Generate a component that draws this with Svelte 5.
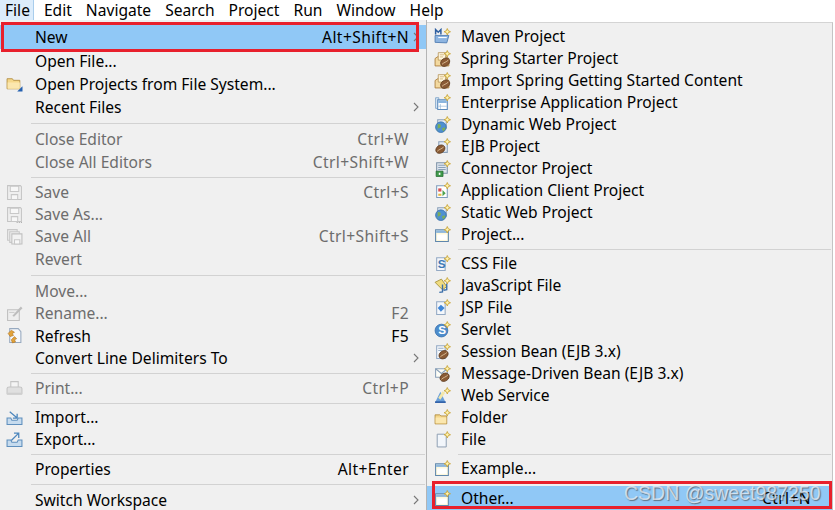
<script>
  const bar = ['File','Edit','Navigate','Search','Project','Run','Window','Help'];
  const left = [
    {t:'New',k:'Alt+Shift+N',h:24,sel:1,arrow:1},
    {t:'Open File...',h:23},
    {t:'Open Projects from File System...',h:23,i:'folderLink'},
    {t:'Recent Files',h:23,arrow:1},
    {h:9},
    {t:'Close Editor',k:'Ctrl+W',h:23,d:1},
    {t:'Close All Editors',k:'Ctrl+Shift+W',h:23,d:1},
    {h:8},
    {t:'Save',k:'Ctrl+S',h:22,d:1,i:'save'},
    {t:'Save As...',h:22,d:1,i:'saveAs'},
    {t:'Save All',k:'Ctrl+Shift+S',h:22,d:1,i:'saveAll'},
    {t:'Revert',h:23,d:1},
    {h:9},
    {t:'Move...',h:23,d:1},
    {t:'Rename...',k:'F2',h:22,d:1,i:'rename'},
    {t:'Refresh',k:'F5',h:23,i:'refresh'},
    {t:'Convert Line Delimiters To',h:22,arrow:1},
    {h:8},
    {t:'Print...',k:'Ctrl+P',h:22,d:1,i:'print'},
    {h:7},
    {t:'Import...',h:22,i:'import'},
    {t:'Export...',h:22,i:'export'},
    {h:8},
    {t:'Properties',k:'Alt+Enter',h:22},
    {h:8},
    {t:'Switch Workspace',h:23,arrow:1}
  ];
  const right = [
    {t:'Maven Project',h:22,i:'maven'},
    {t:'Spring Starter Project',h:22,i:'spring'},
    {t:'Import Spring Getting Started Content',h:22,i:'spring'},
    {t:'Enterprise Application Project',h:22,i:'enterprise'},
    {t:'Dynamic Web Project',h:22,i:'web'},
    {t:'EJB Project',h:22,i:'ejb'},
    {t:'Connector Project',h:22,i:'connector'},
    {t:'Application Client Project',h:22,i:'client'},
    {t:'Static Web Project',h:22,i:'web'},
    {t:'Project...',h:22,i:'window'},
    {h:7},
    {t:'CSS File',h:22,i:'css'},
    {t:'JavaScript File',h:22,i:'js'},
    {t:'JSP File',h:22,i:'jsp'},
    {t:'Servlet',h:22,i:'servlet'},
    {t:'Session Bean (EJB 3.x)',h:22,i:'session'},
    {t:'Message-Driven Bean (EJB 3.x)',h:22,i:'message'},
    {t:'Web Service',h:22,i:'service'},
    {t:'Folder',h:22,i:'folder'},
    {t:'File',h:22,i:'file'},
    {h:7},
    {t:'Example...',h:22,i:'window'},
    {h:7},
    {t:'Other...',k:'Ctrl+N',h:24,sel:1,i:'window'}
  ];
</script>

{#snippet star()}
  <path d="M12.5 .5l.9 2.1 2.1.9-2.1.9-.9 2.1-.9-2.1-2.1-.9 2.1-.9z" fill="#fff4b0" stroke="#c8a030" stroke-width=".8"/>
{/snippet}
{#snippet bean(x, y)}
  <ellipse cx={x} cy={y} rx="4.6" ry="3.6" transform="rotate(-35 {x} {y})" fill="#8a5a34" stroke="#5c3a20" stroke-width=".7"/>
  <path d="M{x-3} {y+2}C{x-1} {y},{x+1} {y},{x+3} {y-2}" stroke="#e0c8a0" stroke-width=".8" fill="none"/>
{/snippet}
{#snippet globe(x, y)}
  <circle cx={x} cy={y} r="5" fill="#4f90d0" stroke="#2f6aa8" stroke-width=".7"/>
  <path d="M{x-3} {y-3}q3 0 3 2t-2 2-1 3M{x+1} {y+1}l3-1 0 2-2 2z" fill="#7cae58"/>
{/snippet}
{#snippet docIcon()}
  <path d="M2.5 2.5h8v12h-8z" fill="#f4f7fb" stroke="#93a9c4"/>
{/snippet}

{#snippet icon(n)}
  <svg class="ico" width="17" height="17" viewBox="0 0 16 16">
    {#if n==='folderLink'}
      <path d="M1 3.500h5l1 1.500h6v8H1z" fill="#f5d88a" stroke="#b08a3c" stroke-width=".8"/><path d="M1.500 7h11.500v6H1.500z" fill="#fbe7ae"/><path d="M15.500 10.500v5h-5z" fill="#2460b0"/>
    {:else if n==='save' || n==='saveAs'}
      <path d="M1.500 1.500h12l1 1v12h-13z" fill="#efefef" stroke="#c4c4c4"/><path d="M4 2h8v5H4zM5 10h6v4.500H5z" fill="#f7f7f7" stroke="#c8c8c8"/>
      {#if n==='saveAs'}<path d="M10 15.500h1M12 15.500h1M14 15.500h1" stroke="#aaa"/>{/if}
    {:else if n==='saveAll'}
      <path d="M1.500 1.500h9v10h-9z" fill="#ececec" stroke="#c8c8c8"/><path d="M3.500 3.500h9v10h-9z" fill="#ececec" stroke="#c8c8c8"/><path d="M5.500 5.500h9.500v9.500H5.500z" fill="#f2f2f2" stroke="#c0c0c0"/><path d="M8 11h5v4H8z" fill="#f8f8f8" stroke="#c8c8c8"/>
    {:else if n==='rename'}
      <path d="M1.500 4.500h11v10h-11z" fill="#eeeeee" stroke="#c0c0c0"/><path d="M6 10l8-8.500 1.500 1.500L7.500 11z" fill="#bdbdbd"/><path d="M3 7h5" stroke="#ccc"/>
    {:else if n==='refresh'}
      <path d="M3.500 1.500h8l2.500 3v10H3.500z" fill="#f6f8fb" stroke="#97a9bf"/><path d="M2 6l3-3 3 2-2 1 1 2-3 1zM5 12l3-3 2 2-2 1 1 2-3 1z" fill="#e2a33a" stroke="#a86a18" stroke-width=".5"/>
    {:else if n==='print'}
      <path d="M4.500 1.500h7v6h-7z" fill="#f4f4f4" stroke="#c4c4c4"/><path d="M1 8q0-1.500 2-1.500h10q2 0 2 1.500v5H1z" fill="#e0e0e0" stroke="#c4c4c4"/><path d="M1 12h14v2H1z" fill="#cfcfcf"/>
    {:else if n==='import' || n==='export'}
      <path d="M1 8.500h3.500l1 2h5l1-2H15v6H1z" fill="#c6dbee" stroke="#5f8fbd"/>
      {#if n==='import'}<path d="M3.500 2.500l6.500 5.500M10.500 4.500v4h-4" fill="none" stroke="#4d87bd" stroke-width="1.200"/>
      {:else}<path d="M5 9l6.500-6.500M7.500 2h4.500v4.500" fill="none" stroke="#4d87bd" stroke-width="1.200"/>{/if}
    {:else if n==='maven'}
      <path d="M1 13.500V7h13l-2 7z" fill="#8db4e0" stroke="#4a78b0" stroke-width=".8"/>
      <path d="M1.500 6V1.500l2.500 2.500 2.500-2.500V6" fill="none" stroke="#2d5ea0" stroke-width="1.400"/>
      <path d="M4 9h8" stroke="#fff"/>{@render star()}
    {:else if n==='spring'}
      <path d="M1 8l6-4 7 4V15H1z" fill="#f3d9a0" stroke="#a97a38" stroke-width=".8"/><path d="M4 2.500h7v7H4z" fill="#fff6dc" stroke="#b08c50" stroke-width=".7"/><path d="M5.500 4.500h4M5.500 6.500h3" stroke="#c8a870" stroke-width=".7"/>
      {@render bean(10.5, 11.500)}{@render star()}
    {:else if n==='enterprise'}
      <path d="M1.500 3.500h3v10h-3z" fill="#dbe9f6" stroke="#7ba0c6" stroke-width=".8"/><path d="M3.500 5.500h9v9h-9z" fill="#fff" stroke="#5b8abc"/><path d="M4 6h8v2.500H4z" fill="#8ab5de"/><path d="M6 9.500v4.500M4 11.500h8" stroke="#9dbbd8" stroke-width=".7"/>{@render star()}
    {:else if n==='web'}
      <path d="M3.500 3.500h8v8h-8z" fill="#e6edf5" stroke="#8aa0b8"/>{@render globe(6.5, 10.500)}{@render star()}
    {:else if n==='ejb'}
      <path d="M4.500 3.500h8v10h-8z" fill="#e6edf5" stroke="#8aa0b8"/>{@render bean(6, 10.500)}{@render star()}
    {:else if n==='connector'}
      <path d="M2.500 2.500h10v10h-10z" fill="#dfe6ee" stroke="#7f93a8"/><path d="M4 5h7M4 7h7M4 9h7" stroke="#8aa0b8"/><path d="M2 10.500h6.500v5H2z" fill="#3f9a4a" stroke="#22692c" stroke-width=".7"/><path d="M4.500 12h1.500v2H4.500z" fill="#fff"/>{@render star()}
    {:else if n==='client'}
      <path d="M2.500 3.500h10v11h-10z" fill="#fff" stroke="#7f9dbd"/><path d="M4 6h3v3H4z" fill="#d95050"/><path d="M8 7.500l3 3-3 3z" fill="#4da24d"/><path d="M4 11h3v2H4z" fill="#e5b940"/>{@render star()}
    {:else if n==='window'}
      <path d="M1.500 3.500h12v11h-12z" fill="#fff9dc" stroke="#5f87ad"/><path d="M2 4h11v2.500H2z" fill="#8db6dc"/><path d="M3 8h9v5H3z" fill="#fff"/>{@render star()}
    {:else if n==='css'}
      {@render docIcon()}<text x="3.500" y="12.500" class="g" fill="#3c78b4">S</text>{@render star()}
    {:else if n==='js'}
      <path d="M1 5l6-3 5 7-4 3z" fill="#f0dc80" stroke="#a08c34" stroke-width=".8"/><path d="M8 7v7l-3 .5M12 6v6l-3 .5" fill="none" stroke="#3a6ea8" stroke-width="1.300"/>{@render star()}
    {:else if n==='jsp'}
      {@render docIcon()}<path d="M6.500 5.500l3.500 3-3.500 3.500-3-3.500z" fill="#3f86d8"/>{@render star()}
    {:else if n==='servlet'}
      <circle cx="7" cy="9" r="6" fill="#4d8ccc" stroke="#2f6aa8" stroke-width=".7"/><text x="4" y="12.500" class="g" fill="#fff">S</text>{@render star()}
    {:else if n==='session'}
      {@render docIcon()}<path d="M4 5h5M4 7h4" stroke="#9ab0c8"/>{@render bean(9, 11)}{@render star()}
    {:else if n==='message'}
      <path d="M1.500 3.500h11v8h-11z" fill="#fdfdf6" stroke="#8aa0b8"/><path d="M1.500 3.500l5.500 4.500 5.500-4.500" fill="none" stroke="#8aa0b8"/>{@render bean(10, 11.500)}{@render star()}
    {:else if n==='service'}
      <path d="M1 14.500l5-10 5 10z" fill="#6aa0da"/><path d="M4 10l4-6 2.500 1.500L6 12z" fill="#f3e7a8"/><path d="M1 13.500h10v1.500H1z" fill="#2c5ca5"/>{@render star()}
    {:else if n==='folder'}
      <path d="M1 5.500h4.500l1 1H12v7.500H1z" fill="#f4d68a" stroke="#b08a3c" stroke-width=".8"/><path d="M1.500 8h10v5.500h-10z" fill="#fbe7ae"/>{@render star()}
    {:else if n==='file'}
      <path d="M3 3h7l1.500 1.500v10.500H3z" fill="#f2f6fb" stroke="#8a9cb0" stroke-width=".9"/>{@render star()}
    {/if}
  </svg>
{/snippet}

{#snippet rows(list)}
  {#each list as r}
    {#if r.t}
      <div class="row" class:sel={r.sel} class:dis={r.d} style:height="{r.h}px">
        <span class="gut">{#if r.i}{@render icon(r.i)}{/if}</span>
        <span class="lbl">{r.t}</span>
        {#if r.k}<span class="key">{r.k}</span>{/if}
        {#if r.arrow}<svg class="chev" width="6" height="10" viewBox="0 0 6 10"><path d="M1 1l4 4-4 4" fill="none" stroke="#777" stroke-width="1.100"/></svg>{/if}
      </div>
    {:else}
      <div class="sep" style:height="{r.h}px"></div>
    {/if}
  {/each}
{/snippet}

<div class="page">
  <div class="bar">
    {#each bar as b, i}<span class="top" class:open={i===0}>{b}</span>{/each}
  </div>
  <div class="menus">
    <div class="menu leftm">{@render rows(left)}</div>
    <div class="menu rightm">{@render rows(right)}</div>
  </div>
  <div class="redbox a"></div>
  <div class="redbox b"></div>
  <div class="mark">CSDN @sweet987250</div>
</div>

<style>
  :global(body){margin:0;background:#fff}
  .page{position:relative;width:835px;height:510px;overflow:hidden;font:15.6px/1 "Noto Sans","Open Sans",sans-serif;color:#000}
  .bar{display:flex;height:20px;background:#fff;align-items:center}
  .top{padding:0 7px;line-height:20px}
  .top.open{background:#dcecfb;padding:0 4px 0 5px;margin-right:3px;box-shadow:inset -1px 0 #a9cdec}
  .menus{display:flex;height:490px}
  .menu{background:#f0f0f0;box-sizing:border-box}
  .leftm{width:427px;padding:5px 0 0 0;border-right:1px solid #b4b4b4}
  .rightm{width:406px;margin-top:2px;padding:2px 0 0 0;border-top:1px solid #d4d4d4;border-right:1px solid #c4c4c4}
  .row{display:flex;align-items:center;white-space:nowrap}
  .gut{flex:none;width:35px;display:flex;align-items:center;justify-content:center;box-sizing:border-box;padding-right:7px}
  .rightm .gut{width:34px;padding-right:3px}
  .rightm .row{padding-right:21px}
  .leftm .row{padding-right:17px;position:relative}
  .lbl{flex:1;padding-top:2px}
  .key{flex:none;letter-spacing:.4px;padding-top:2px}
  .dis{color:#6d6d6d}
  .sel{background:#90c8f6}
  .chev{position:absolute;right:7px;top:50%;margin-top:-5px}
  .sep{position:relative}
  .sep::after{content:"";position:absolute;left:31px;right:1px;top:50%;height:1px;background:#d2d2d2}
  .ico{display:block;flex:none}
  .g{font:700 11px "Liberation Sans",sans-serif}
  .redbox{position:absolute;border:3px solid #e8202c;box-sizing:border-box}
  .a{left:1px;top:22px;width:418px;height:30px}
  .b{left:432px;top:481px;width:400px;height:28px}
  .mark{position:absolute;left:624px;top:483px;font:19.500px/20px "Liberation Sans",sans-serif;color:rgba(235,240,245,.75);text-shadow:1px 1px 1px rgba(60,60,60,.6)}
</style>
